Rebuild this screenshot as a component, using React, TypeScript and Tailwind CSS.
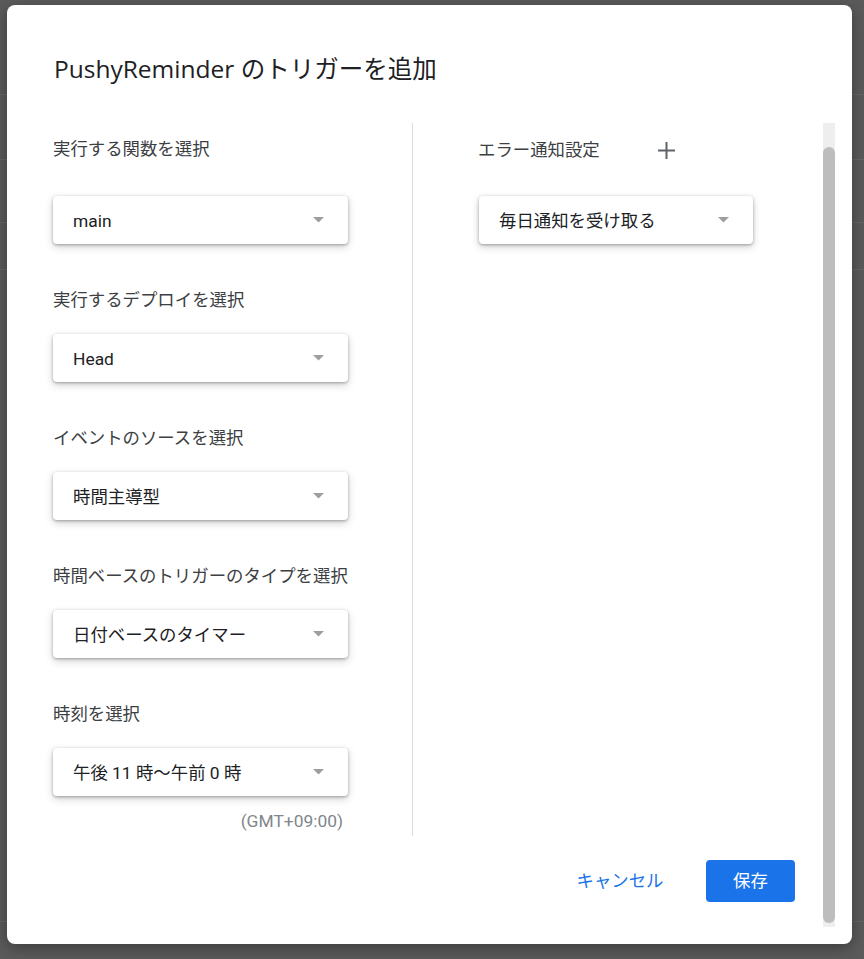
import React from 'react';

const bodyFont = { fontFamily: 'Roboto, "Noto Sans CJK JP", sans-serif' };
const titleFont = { fontFamily: '"Open Sans", "Noto Sans CJK JP", sans-serif' };

interface Field {
  label: string;
  value: string;
}

const fields: Field[] = [
  { label: '実行する関数を選択', value: 'main' },
  { label: '実行するデプロイを選択', value: 'Head' },
  { label: 'イベントのソースを選択', value: '時間主導型' },
  { label: '時間ベースのトリガーのタイプを選択', value: '日付ベースのタイマー' },
  { label: '時刻を選択', value: '午後 11 時～午前 0 時' },
];

function DropArrow() {
  return (
    <svg width="11" height="6" viewBox="0 0 11 6" className="shrink-0">
      <path d="M0 0h11L5.5 5.5z" fill="#9e9e9e" />
    </svg>
  );
}

function SelectBox({ value, className = '' }: { value: string; className?: string }) {
  return (
    <div
      className={`flex h-[48px] items-center justify-between rounded-[4px] bg-white pl-[20px] pr-[24px] text-[17.4px] text-[#202124] shadow-[0_1px_3px_rgba(0,0,0,0.3),0_3px_8px_rgba(0,0,0,0.18)] ${className}`}
    >
      <span className="pt-[2px]">{value}</span>
      <DropArrow />
    </div>
  );
}

// Faint rows of the page behind the modal
function BackgroundPage() {
  const rows = [95, 65, 63, 47, 652];
  return (
    <div className="flex flex-col">
      {rows.map((h, i) => (
        <div key={i} className="border-b border-[#676767]" style={{ height: h }} />
      ))}
    </div>
  );
}

export default function App() {
  return (
    <div className="relative h-[959px] w-[864px] overflow-hidden bg-[#5b5b5b]" style={bodyFont}>
      <BackgroundPage />

      {/* Dialog */}
      <div className="absolute left-[7px] top-[5px] flex h-[939px] w-[845px] flex-col rounded-[8px] bg-white shadow-[0_4px_16px_rgba(0,0,0,0.35)]">
        <h1
          className="pl-[47px] pt-[48px] text-[24.5px] leading-[32px] text-[#202124]"
          style={titleFont}
        >
          PushyReminder のトリガーを追加
        </h1>

        <div className="mt-[38px] flex flex-1 pb-[17px]">
          <div className="flex flex-1 flex-col">
            <div className="flex h-[713px]">
              {/* Left column */}
              <div className="ml-[46px] w-[360px] border-r border-[#dadce0] pt-[14px]">
                <div className="w-[295px]">
                  {fields.map((f, i) => (
                    <div key={f.label} className={i === 0 ? '' : 'mt-[44px]'}>
                      <div className="h-[24px] text-[17.4px] leading-[24px] text-[#3c4043]">
                        {f.label}
                      </div>
                      <SelectBox value={f.value} className={i === 0 ? 'mt-[35px]' : 'mt-[22px]'} />
                    </div>
                  ))}
                  <div className="mt-[13px] pr-[5px] text-right text-[17.4px] leading-[24px] text-[#80868b]">
                    (GMT+09:00)
                  </div>
                </div>
              </div>

              {/* Right column */}
              <div className="pl-[65px] pt-[7px]">
                <div className="flex h-[40px] items-center">
                  <span className="text-[17.4px] leading-[24px] text-[#3c4043]">エラー通知設定</span>
                  <button className="ml-[47px] flex h-[40px] w-[40px] items-center justify-center">
                    <svg width="17" height="17" viewBox="0 0 17 17">
                      <path d="M8.5 0v17M0 8.5h17" stroke="#5f6368" strokeWidth="2" />
                    </svg>
                  </button>
                </div>
                <SelectBox value="毎日通知を受け取る" className="ml-[1px] mt-[26px] w-[274px]" />
              </div>
            </div>

            {/* Actions */}
            <div className="mt-[24px] flex justify-end pr-[28px]">
              <button className="mr-[30px] flex h-[42px] w-[112px] items-center justify-center text-[17.4px] text-[#1a73e8]">
                キャンセル
              </button>
              <button className="flex h-[42px] w-[89px] items-center justify-center rounded-[4px] bg-[#1a73e8] text-[17.4px] text-white">
                保存
              </button>
            </div>
          </div>

          {/* Scrollbar */}
          <div className="mr-[17px] flex w-[12px] flex-col bg-[#eeeeee] pb-[4px] pt-[24px]">
            <div className="flex-1 rounded-full bg-[#bdbdbd]" />
          </div>
        </div>
      </div>
    </div>
  );
}
